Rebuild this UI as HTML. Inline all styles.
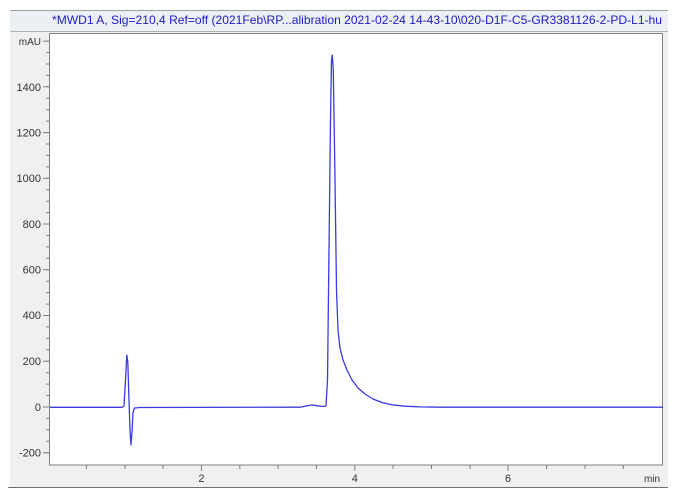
<!DOCTYPE html>
<html><head><meta charset="utf-8"><style>
html,body{margin:0;padding:0;background:#fff;width:673px;height:501px;overflow:hidden}
</style></head><body>
<svg width="673" height="501" xmlns="http://www.w3.org/2000/svg" style="display:block">
<rect x="10" y="10" width="658" height="478" fill="#f0f0f0"/>
<rect x="10" y="10" width="658" height="22" fill="#eceff4"/>
<line x1="10" y1="10.5" x2="668" y2="10.5" stroke="#a0a0a0"/>
<line x1="10" y1="31.5" x2="668" y2="31.5" stroke="#b0b0b0"/>
<line x1="8" y1="487.5" x2="668" y2="487.5" stroke="#707070"/>
<text x="52" y="24" textLength="610" lengthAdjust="spacingAndGlyphs" font-family="Liberation Sans, sans-serif" font-size="12" fill="#1c1cc8">*MWD1 A, Sig=210,4 Ref=off (2021Feb\RP...alibration 2021-02-24 14-43-10\020-D1F-C5-GR3381126-2-PD-L1-hu</text>
<rect x="49.5" y="33.5" width="613" height="431.5" fill="#fff" stroke="#808080"/>
<g stroke="#808080" stroke-width="1">
<path d="M46 452.7H49M46 441.3H49M46 429.8H49M46 418.4H49M46 407H49M46 395.5H49M46 384.1H49M46 372.7H49M46 361.2H49M46 349.8H49M46 338.4H49M46 326.9H49M46 315.5H49M46 304.1H49M46 292.6H49M46 281.2H49M46 269.8H49M46 258.3H49M46 246.9H49M46 235.5H49M46 224H49M46 212.6H49M46 201.2H49M46 189.7H49M46 178.3H49M46 166.9H49M46 155.4H49M46 144H49M46 132.6H49M46 121.1H49M46 109.7H49M46 98.3H49M46 86.8H49M46 75.4H49M46 64H49M46 52.5H49M46 41.1H49"/>
<path d="M43 452.7H49M43 407H49M43 361.2H49M43 315.5H49M43 269.8H49M43 224H49M43 178.3H49M43 132.6H49M43 86.8H49M43 41.1H49"/>
<path d="M86.4 465V469M125 465V469M163 465V469M239.8 465V469M278 465V469M316.5 465V469M393 465V469M431.5 465V469M470 465V469M546.6 465V469M585 465V469M623.3 465V469"/>
<path d="M201.4 465V471M354.8 465V471M508 465V471"/>
</g>
<g font-family="Liberation Sans, sans-serif" font-size="11" fill="#333" text-anchor="end">
<text x="41" y="45" font-size="10">mAU</text>
<text x="41" y="91">1400</text>
<text x="41" y="136.5">1200</text>
<text x="41" y="182">1000</text>
<text x="41" y="228">800</text>
<text x="41" y="273.5">600</text>
<text x="41" y="319">400</text>
<text x="41" y="365">200</text>
<text x="41" y="411">0</text>
<text x="41" y="456.5">-200</text>
</g>
<g font-family="Liberation Sans, sans-serif" font-size="11" fill="#333" text-anchor="middle">
<text x="201.4" y="482">2</text>
<text x="354.8" y="482">4</text>
<text x="508" y="482">6</text>
<text x="652" y="482" font-size="10">min</text>
</g>
<path fill="none" stroke="#3a3ae0" stroke-width="1.3" stroke-linejoin="round" d="M50 407.3L122 407.3L124 406L125.5 380L126.8 355L127.8 362L129 400L130 430L131 445L132 432L133 412L134.5 408L140 407.5L300 407.2L306 406L312 405L318 405.8L323 406.5L326 406L327.5 380L329 250L330.5 120L331.5 60L332.3 55L333.3 70L335 180L336.5 290L338 330L340 348L343 360L347 370L352 380L358 388L365 394L373 399L382 402.5L392 404.8L405 406.2L420 406.9L440 407.2L663 407.2"/>
</svg>
</body></html>
